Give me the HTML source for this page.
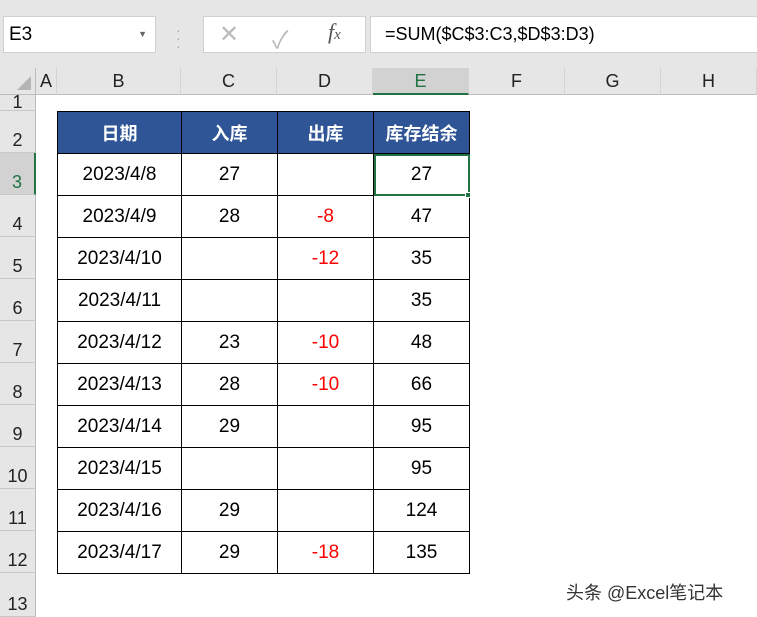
<html><head><style>
body{margin:0;width:757px;height:617px;overflow:hidden;background:#fff;font-family:"Liberation Sans","Noto Sans CJK SC",sans-serif;position:relative}
.a{position:absolute;box-sizing:border-box}
.ch{position:absolute;top:68px;height:27px;border-right:1px solid #d4d4d4;border-bottom:1px solid #bdbdbd;background:#e6e6e6;text-align:center;font-size:18px;line-height:26px;color:#222;box-sizing:border-box}
.rh{position:absolute;left:0;width:36px;border-bottom:1px solid #c8c8c8;border-right:1px solid #bdbdbd;background:#e6e6e6;font-size:18px;color:#222;text-align:center;box-sizing:border-box;display:flex;align-items:flex-end;justify-content:center;padding-bottom:1px}
table{position:absolute;left:57px;top:111px;border-collapse:collapse}
td{border:1px solid #000;height:42px;padding:0;text-align:center;font-size:19px;box-sizing:border-box}
th{background:#2F5597;color:#fff;border:1px solid #000;height:42px;font-size:18px;font-weight:bold;box-sizing:border-box;padding:0}
.r{color:#f00}
</style></head><body>
<div class="a" style="left:0;top:0;width:757px;height:68px;background:#e6e6e6"></div>
<div class="a" style="left:3px;top:16px;width:153px;height:37px;background:#fff;border:1px solid #d0d0d0;font-size:19px;line-height:35px;padding-left:5px">E3<span style="position:absolute;right:8px;top:0;font-size:9px;color:#666">▼</span></div>
<div class="a" style="left:176px;top:26px;color:#aaa;font-size:14px;line-height:8px">·<br>·<br>·</div>
<div class="a" style="left:203px;top:16px;width:163px;height:37px;background:#fff;border:1px solid #d0d0d0"></div>
<div class="a" style="left:219px;top:20px;font-size:24px;color:#bbb">✕</div>
<div class="a" style="left:272px;top:20px;font-size:24px;color:#bbb">✓</div>
<div class="a" style="left:328px;top:19px;font-size:22px;color:#555;font-style:italic;font-family:'Liberation Serif',serif">f<span style="font-size:15px">x</span></div>
<div class="a" style="left:370px;top:16px;width:390px;height:37px;background:#fff;border:1px solid #d0d0d0;font-size:18px;line-height:35px;padding-left:14px">=SUM($C$3:C3,$D$3:D3)</div>
<div class="a" style="left:0;top:68px;width:36px;height:27px;background:#e6e6e6;border-right:1px solid #bdbdbd;border-bottom:1px solid #bdbdbd"><div style="position:absolute;right:4px;bottom:4px;width:0;height:0;border-left:14px solid transparent;border-bottom:14px solid #b5b5b5"></div></div>
<div class="ch" style="left:36px;width:21px">A</div>
<div class="ch" style="left:57px;width:124px">B</div>
<div class="ch" style="left:181px;width:96px">C</div>
<div class="ch" style="left:277px;width:96px">D</div>
<div class="ch" style="left:373px;width:96px;background:#d2d2d2;color:#217346;border-bottom:2px solid #217346">E</div>
<div class="ch" style="left:469px;width:96px">F</div>
<div class="ch" style="left:565px;width:96px">G</div>
<div class="ch" style="left:661px;width:96px">H</div>
<div class="rh" style="top:95px;height:16px;line-height:16px;align-items:center">1</div>
<div class="rh" style="top:111px;height:42px">2</div>
<div class="rh" style="top:153px;height:42px;background:#d2d2d2;color:#217346;border-right:2px solid #217346">3</div>
<div class="rh" style="top:195px;height:42px">4</div>
<div class="rh" style="top:237px;height:42px">5</div>
<div class="rh" style="top:279px;height:42px">6</div>
<div class="rh" style="top:321px;height:42px">7</div>
<div class="rh" style="top:363px;height:42px">8</div>
<div class="rh" style="top:405px;height:42px">9</div>
<div class="rh" style="top:447px;height:42px">10</div>
<div class="rh" style="top:489px;height:42px">11</div>
<div class="rh" style="top:531px;height:42px">12</div>
<div class="rh" style="top:573px;height:44px">13</div>
<table>
<colgroup><col style="width:124px"><col style="width:96px"><col style="width:96px"><col style="width:96px"></colgroup>
<tr style="height:42px"><th>日期</th><th>入库</th><th>出库</th><th>库存结余</th></tr>
<tr style="height:42px"><td>2023/4/8</td><td>27</td><td></td><td style="outline:2px solid #217346;outline-offset:-2px">27</td></tr>
<tr style="height:42px"><td>2023/4/9</td><td>28</td><td class="r">-8</td><td>47</td></tr>
<tr style="height:42px"><td>2023/4/10</td><td></td><td class="r">-12</td><td>35</td></tr>
<tr style="height:42px"><td>2023/4/11</td><td></td><td></td><td>35</td></tr>
<tr style="height:42px"><td>2023/4/12</td><td>23</td><td class="r">-10</td><td>48</td></tr>
<tr style="height:42px"><td>2023/4/13</td><td>28</td><td class="r">-10</td><td>66</td></tr>
<tr style="height:42px"><td>2023/4/14</td><td>29</td><td></td><td>95</td></tr>
<tr style="height:42px"><td>2023/4/15</td><td></td><td></td><td>95</td></tr>
<tr style="height:42px"><td>2023/4/16</td><td>29</td><td></td><td>124</td></tr>
<tr style="height:42px"><td>2023/4/17</td><td>29</td><td class="r">-18</td><td>135</td></tr>
</table>
<div class="a" style="left:465px;top:192px;width:6px;height:6px;background:#217346;border:1px solid #fff"></div>
<div class="a" style="left:566px;top:579px;font-size:18px;color:#333">头条 @Excel笔记本</div>
</body></html>
